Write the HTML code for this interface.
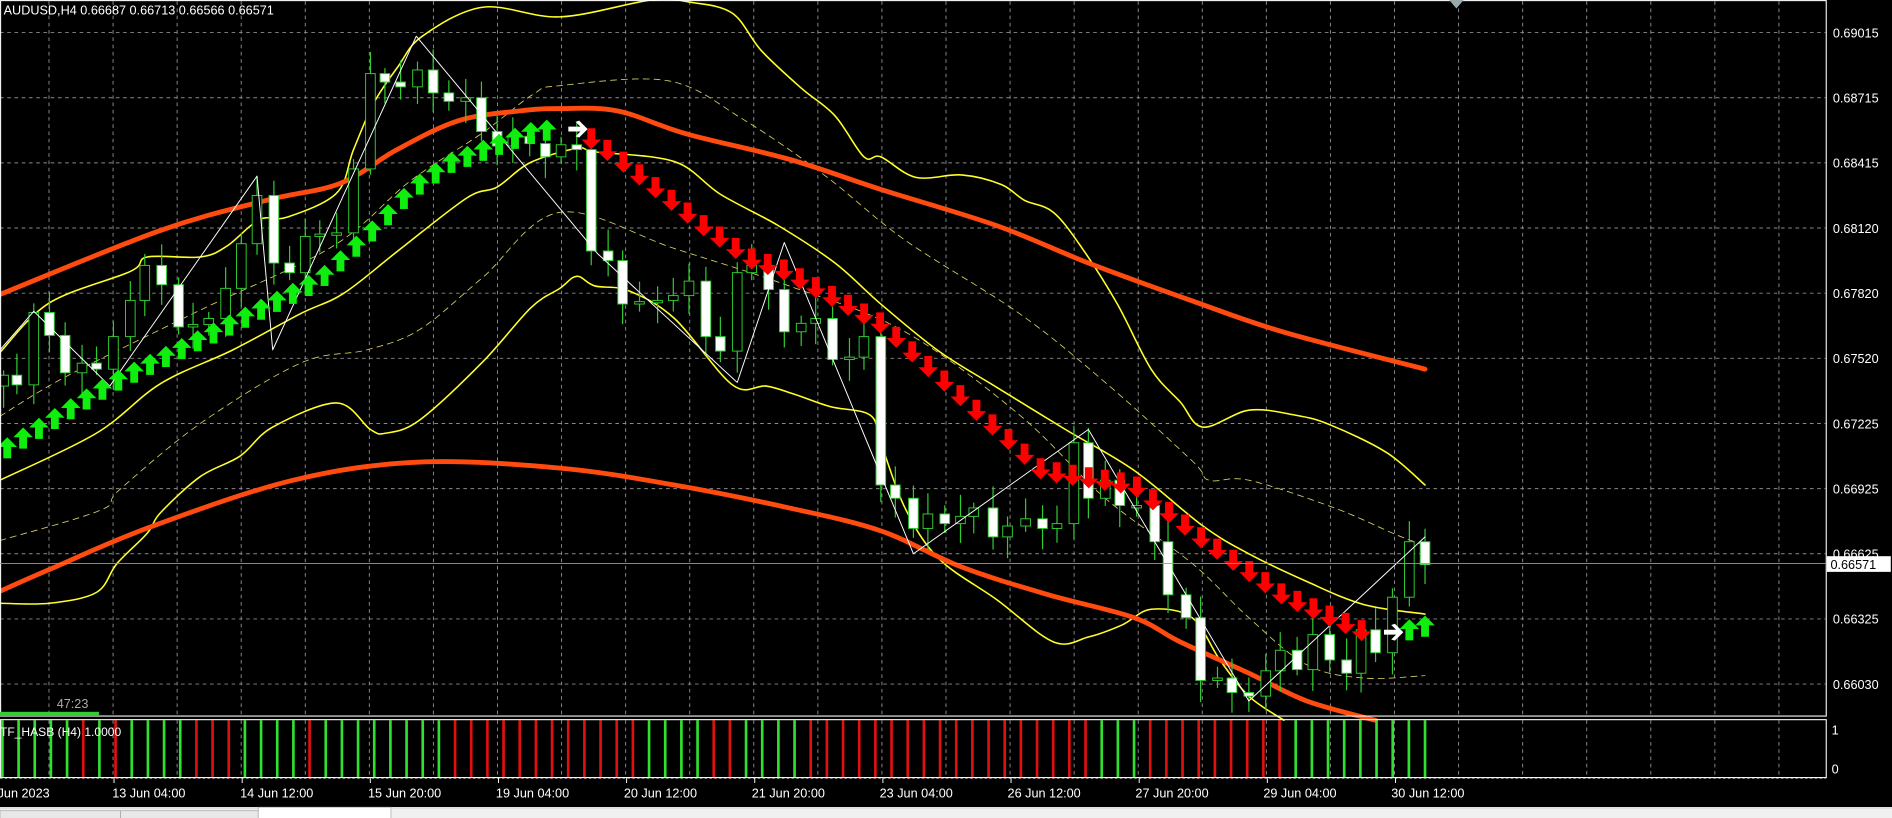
<!DOCTYPE html>
<html><head><meta charset="utf-8">
<style>
html,body{margin:0;padding:0;background:#000;width:1892px;height:818px;overflow:hidden}
svg{display:block}
text{font-family:"Liberation Sans","DejaVu Sans",sans-serif}
</style></head>
<body>
<svg id="s" width="1892" height="818" viewBox="0 0 1568 678" preserveAspectRatio="none" xmlns="http://www.w3.org/2000/svg">
<rect x="0" y="0" width="1568" height="678" fill="#000"/>
<g id="grid" stroke="#8a8a8a" stroke-width="0.8" stroke-dasharray="3,3"></g>
<g id="draw"></g>
<rect x="0.5" y="0.5" width="1513" height="593" fill="none" stroke="#fff" stroke-width="0.9"/>
<rect x="0.5" y="596.5" width="1513" height="48" fill="none" stroke="#fff" stroke-width="0.9"/>
<text x="3" y="12" fill="#fff" font-size="10.5">AUDUSD,H4  0.66687 0.66713 0.66566 0.66571</text>
<polygon points="1201,0 1213,0 1207,7" fill="#9aa"/>
<text x="47" y="587" fill="#aaa" font-size="10.5">47:23</text>
<rect x="0" y="590" width="82" height="3.5" fill="#3c3"/>
<g fill="#fff" font-size="10.5">
<text x="1519" y="31">0.69015</text><text x="1519" y="85">0.68715</text>
<text x="1519" y="139">0.68415</text><text x="1519" y="193">0.68120</text>
<text x="1519" y="247">0.67820</text><text x="1519" y="301">0.67520</text>
<text x="1519" y="355">0.67225</text><text x="1519" y="409">0.66925</text>
<text x="1519" y="463">0.66625</text><text x="1519" y="517">0.66325</text>
<text x="1519" y="571">0.66030</text>
<text x="1518" y="609">1</text><text x="1518" y="641">0</text>
</g>
<line x1="0" y1="467" x2="1513" y2="467" stroke="#999" stroke-width="0.7"/>
<rect x="1514" y="461" width="53" height="13" fill="#fff"/>
<text x="1517" y="471.5" fill="#000" font-size="10.5">0.66571</text>
<g fill="#fff" font-size="10.5">
<text x="-2" y="661">Jun 2023</text>
<text x="93" y="661">13 Jun 04:00</text><text x="199" y="661">14 Jun 12:00</text>
<text x="305" y="661">15 Jun 20:00</text><text x="411" y="661">19 Jun 04:00</text>
<text x="517" y="661">20 Jun 12:00</text><text x="623" y="661">21 Jun 20:00</text>
<text x="729" y="661">23 Jun 04:00</text><text x="835" y="661">26 Jun 12:00</text>
<text x="941" y="661">27 Jun 20:00</text><text x="1047" y="661">29 Jun 04:00</text>
<text x="1153" y="661">30 Jun 12:00</text>
</g>
<rect x="0" y="670" width="1568" height="8" fill="#f0f0f0"/>
<line x1="0" y1="669.5" x2="1568" y2="669.5" stroke="#fff"/>
<rect x="0" y="672" width="100" height="8" fill="#e8e8e8" stroke="#999" stroke-width="0.5"/>
<rect x="100" y="672" width="114" height="8" fill="#e8e8e8" stroke="#999" stroke-width="0.5"/>
<rect x="214" y="669" width="110" height="10" fill="#fff" stroke="#999" stroke-width="0.5"/>
<g id="top"></g>
<text x="0" y="610" fill="#fff" font-size="10">TF_HASB (H4) 1.0000</text>
</svg>
<script>
const NS="http://www.w3.org/2000/svg";
const g=document.getElementById('grid'),d=document.getElementById('draw'),tp=document.getElementById('top');
function el(t,a,p){const e=document.createElementNS(NS,t);for(const k in a)e.setAttribute(k,a[k]);(p||d).appendChild(e);return e;}
for(let x=40.6;x<1513;x+=53.1){el('line',{x1:x,y1:1,x2:x,y2:593},g);el('line',{x1:x,y1:597,x2:x,y2:645},g);}
for(let i=0;i<11;i++){const y=27+i*54;el('line',{x1:0,y1:y,x2:1513,y2:y},g);}
el('line',{x1:0,y1:645,x2:1513,y2:645,stroke:'#fff','stroke-width':0.6,'stroke-dasharray':'2,2'},tp);
for(let x=94.5,i=0;i<11;i++,x+=106.2)el('line',{x1:x,y1:645,x2:x,y2:649,stroke:'#fff','stroke-width':0.8},tp);
function interp(pts,x){for(let i=0;i<pts.length-1;i++){if(x>=pts[i][0]&&x<=pts[i+1][0]){const t=(x-pts[i][0])/(pts[i+1][0]-pts[i][0]);return pts[i][1]+t*(pts[i+1][1]-pts[i][1]);}}return x<pts[0][0]?pts[0][1]:pts[pts.length-1][1];}
function smooth(p){let s=`M${p[0][0]},${p[0][1]}`;for(let i=0;i<p.length-1;i++){const p0=p[i-1]||p[i],p1=p[i],p2=p[i+1],p3=p[i+2]||p2;
 s+=` C${p1[0]+(p2[0]-p0[0])/6},${p1[1]+(p2[1]-p0[1])/6} ${p2[0]-(p3[0]-p1[0])/6},${p2[1]-(p3[1]-p1[1])/6} ${p2[0]},${p2[1]}`;}return s;}
function line(pts,c,w,dash,sm=true){const a={d:sm?smooth(pts):'M'+pts.map(p=>p.join(',')).join(' L'),fill:'none',stroke:c,'stroke-width':w,'stroke-linejoin':'round','stroke-linecap':'round'};if(dash)a['stroke-dasharray']=dash;el('path',a);}
const Y='#ffff2a';
line([[0,345],[55,312],[166,257],[276,204],[340,150],[400,110],[442,78],[464,71],[554,67],[616,99],[683,145],[750,199],[845,260],[916,317],[988,382],[1002,398],[1035,398],[1106,421],[1159,444],[1182,452]],'#d8d060',0.7,'5,4');
line([[0,448],[83,423],[99,406],[166,351],[249,301],[304,290],[348,273],[400,230],[464,176],[559,206],[654,237],[750,275],[845,344],[916,413],[988,467],[1035,512],[1083,551],[1130,562],[1181,560]],'#d8d060',0.7,'5,4');
line([[0,292],[41,251],[108,225],[122,213],[166,213],[188,204],[215,182],[238,180],[279,160],[293,124],[310,85],[330,55],[350,30],[400,6],[464,14],[540,0],[573,2],[607,11],[631,42],[664,73],[692,96],[716,130],[730,130],[759,147],[797,145],[830,153],[849,166],[873,176],[897,206],[926,252],[954,306],[978,333],[997,354],[1035,340],[1073,344],[1102,352],[1149,375],[1181,402]],Y,1.3);
line([[0,398],[80,359],[133,318],[193,290],[249,260],[285,243],[331,207],[387,164],[412,155],[439,135],[478,123],[494,126],[559,134],[597,161],[645,187],[692,218],[730,252],[778,291],[826,321],[883,356],[940,390],[997,436],[1035,459],[1083,482],[1130,501],[1181,509]],Y,1.3);
line([[0,500],[41,500],[80,491],[97,467],[122,442],[133,425],[166,395],[199,378],[226,354],[279,334],[307,356],[320,359],[348,348],[400,300],[440,255],[464,239],[478,229],[493,237],[521,241],[559,264],[607,319],[635,320],[659,327],[688,337],[721,344],[730,367],[750,421],[778,463],[826,497],[873,532],[902,528],[930,518],[954,505],[988,512],[1011,547],[1035,577],[1064,597]],Y,1.3);
line([[0,244],[133,191],[221,166],[282,152],[329,124],[380,100],[430,92],[464,90],[512,92],[569,111],[654,132],[730,157],[826,187],[902,218],[987,249],[1063,275],[1181,306]],'#ff4a10',4);
line([[0,490],[41,472],[124,437],[243,398],[348,383],[464,388],[559,402],[654,421],[730,440],[797,470],[869,493],[940,512],[978,532],[1035,558],[1083,581],[1140,597]],'#ff4a10',4);
const C=[[3,311],[14,319],[28,259],[41,278],[54,309],[68,301],[80,306],[94,279],[108,249],[120,220],[134,236],[148,271],[160,269],[173,264],[187,239],[200,202],[213,162],[227,218],[240,226],[253,196],[265,194],[279,193],[293,140],[307,61],[319,68],[332,72],[346,58],[359,77],[372,84],[386,81],[399,109],[412,121],[425,113],[439,119],[452,130],[465,120],[478,124],[490,208],[504,216],[516,252],[530,250],[545,249],[558,245],[571,233],[585,279],[597,291],[611,226],[623,220],[637,240],[650,275],[664,268],[676,264],[690,298],[704,296],[716,279],[730,402],[742,413],[757,438],[769,426],[783,434],[796,428],[807,421],[823,445],[835,436],[850,430],[864,438],[876,434],[890,367],[902,413],[916,398],[928,419],[942,419],[957,449],[968,493],[983,512],[995,564],[1009,562],[1021,574],[1035,577],[1049,556],[1061,539],[1075,555],[1088,526],[1102,547],[1116,558],[1128,522],[1140,541],[1154,495],[1168,449],[1181,468]];
let prev=320;
C.forEach(([x,c],i)=>{const o=prev;prev=c;const bear=c>o;
 const hi=Math.min(o,c)-4-Math.abs(Math.sin(i*1.7))*14, lo=Math.max(o,c)+4+Math.abs(Math.cos(i*1.3))*14;
 el('line',{x1:x,y1:hi,x2:x,y2:lo,stroke:'#2fcc2f','stroke-width':1});
 const top=Math.min(o,c),h=Math.max(2,Math.abs(c-o));
 el('rect',{x:x-4,y:top,width:8,height:h,fill:bear?'#fff':'#000',stroke:'#2fcc2f','stroke-width':0.8});
});
const H="GGGGGRGRGGGGRRRGGGGRGGGGGGGGRRRRRRRRRRRRGGGGRRGGGGRRRRRRRRRRRRRRRRRRGGGRRRRRRRRRGGGGGGGGG";
for(let i=0;i<H.length;i++){const x=2+i*(1179/88);el('line',{x1:x,y1:597,x2:x,y2:644,stroke:H[i]=='R'?'#e01010':'#30e030','stroke-width':2.2});}
line([[0,290],[28,258],[91,320],[213,146],[226,290],[345,30],[495,210],[611,317],[650,201],[757,459],[902,356],[1035,581],[1181,445]],'#fff',0.8,null,false);
const up="M0,-7 L6.5,-0.5 L2.6,-0.5 L2.6,7 L-2.6,7 L-2.6,-0.5 L-6.5,-0.5 Z", dn="M0,7 L6.5,0.5 L2.6,0.5 L2.6,-7 L-2.6,-7 L-2.6,0.5 L-6.5,0.5 Z";
const gp=[[3,373],[94,317],[199,265],[265,232],[304,196],[343,156],[373,135],[439,110],[466,106]];
for(let x=6;x<=466;x+=13.15){el('path',{d:up,transform:`translate(${x},${interp(gp,x)}) scale(1.25)`,fill:'#10ee10'});}
const ar="M-8,-2 L2,-2 L-2,-6 L1,-7 L8,0 L1,7 L-2,6 L2,2 L-8,2 Z";
el('path',{d:ar,transform:'translate(479,107)',fill:'#fff'});
const rp=[[490,115],[516,134],[583,187],[621,214],[650,224],[730,268],[797,329],[864,390],[940,402],[997,447],[1063,493],[1140,528]];
for(let x=490;x<=1141;x+=13.3){el('path',{d:dn,transform:`translate(${x},${interp(rp,x)}) scale(1.25)`,fill:'#f00'});}
el('path',{d:ar,transform:'translate(1155,524)',fill:'#fff'});
for(const [x,y] of [[1168,522],[1181,519]])el('path',{d:up,transform:`translate(${x},${y}) scale(1.25)`,fill:'#10ee10'});
</script>
</body></html>
